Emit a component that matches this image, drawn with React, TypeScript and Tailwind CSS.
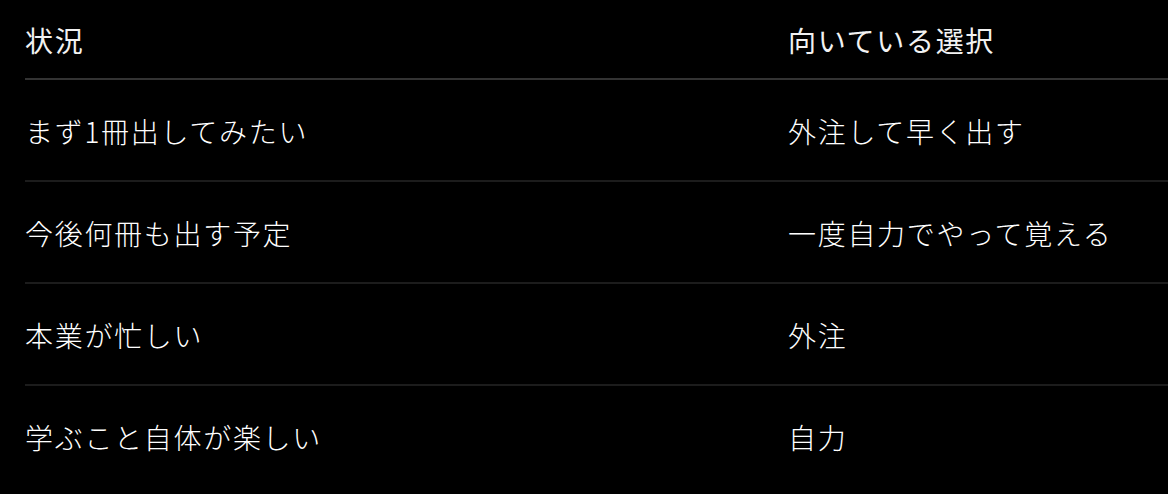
const rows = [
  { situation: "まず1冊出してみたい", choice: "外注して早く出す" },
  { situation: "今後何冊も出す予定", choice: "一度自力でやって覚える" },
  { situation: "本業が忙しい", choice: "外注" },
  { situation: "学ぶこと自体が楽しい", choice: "自力" },
];

export default function App() {
  return (
    <div
      className="min-h-[494px] w-full overflow-hidden bg-black pl-[25px] text-[28px] tracking-[1.7px] text-[#f2f2f2]"
      style={{ fontFamily: '"Noto Sans CJK JP", "Noto Sans", sans-serif' }}
    >
      {/* Header */}
      <div className="grid h-[80px] grid-cols-[763px_1fr] items-center border-b-2 border-[#333333] pt-[2px]">
        <div>状況</div>
        <div>向いている選択</div>
      </div>

      {/* Body */}
      {rows.map((row, i) => (
        <div
          key={i}
          className={
            i < rows.length - 1
              ? "grid h-[102px] grid-cols-[763px_1fr] items-center border-b-2 border-[#1c1c1c] pt-[2px]"
              : "grid h-[100px] grid-cols-[763px_1fr] items-center pt-[2px]"
          }
        >
          <div className="font-light text-white">{row.situation}</div>
          <div className="font-light text-white">{row.choice}</div>
        </div>
      ))}
    </div>
  );
}
